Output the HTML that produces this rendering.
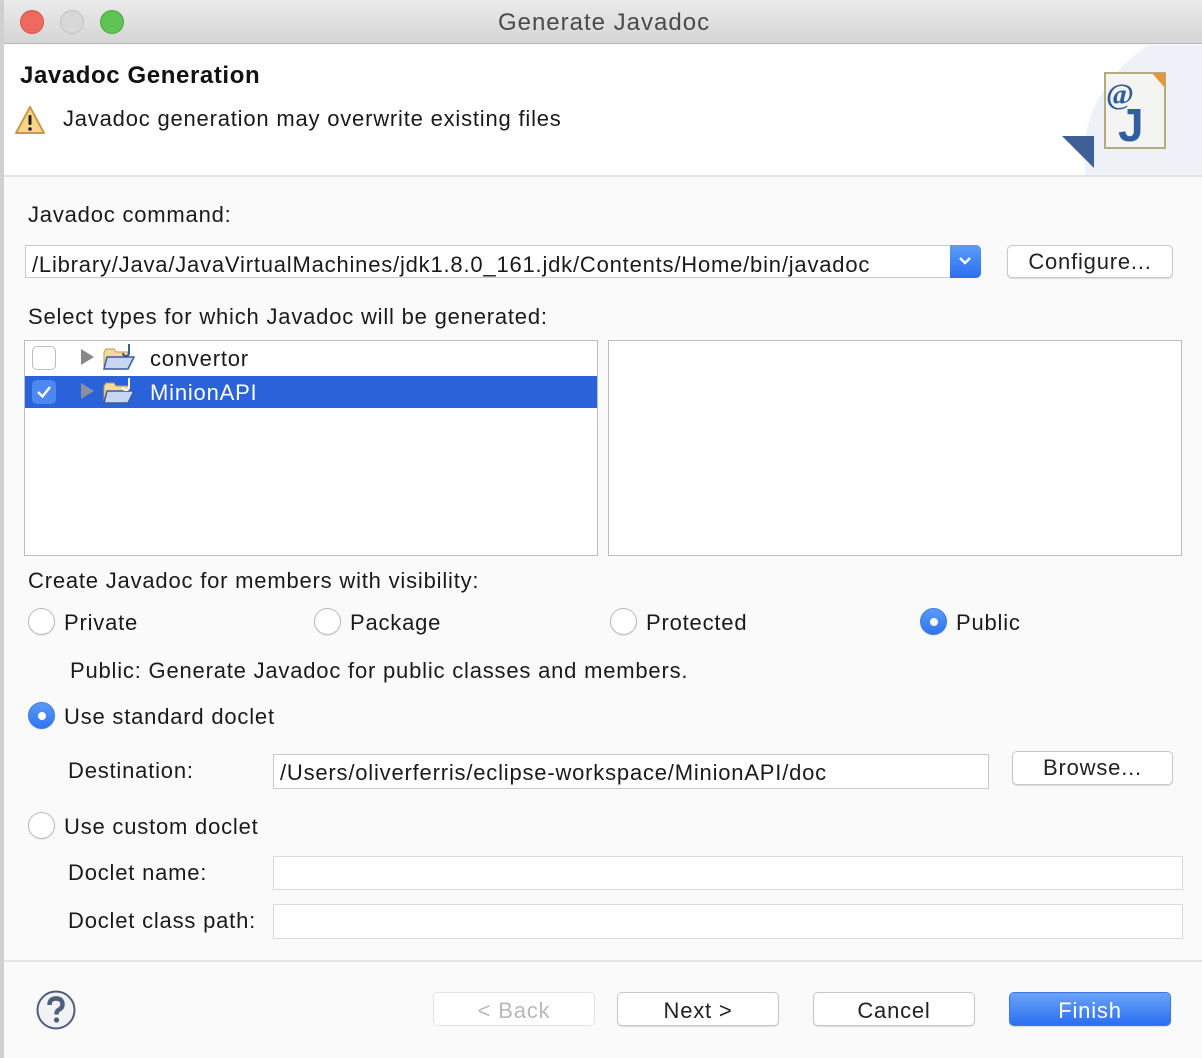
<!DOCTYPE html>
<html><head><meta charset="utf-8"><style>
*{margin:0;padding:0;box-sizing:border-box}
body{width:1202px;height:1058px;overflow:hidden;background:#fafafa;font-family:"Liberation Sans",Helvetica,Arial,sans-serif;color:#1a1a1a;position:relative;font-size:22px;letter-spacing:0.8px}
.a{position:absolute;white-space:nowrap}
.t{line-height:24px;margin-top:1px}
.btn{position:absolute;background:#fff;border:1px solid #c8c8c8;border-radius:5px;box-shadow:0 1px 1px rgba(0,0,0,.12);text-align:center;font-size:22px;color:#222}
.field{position:absolute;background:#fff;border:1px solid #c9c9c9}
.radio{position:absolute;width:27px;height:27px;border-radius:50%;border:1px solid #b9b9b9;background:#fff;box-shadow:0 1px 1px rgba(0,0,0,.08)}
.radio.on{background:linear-gradient(#5a9bf7,#2f74ef);border-color:#3a7be8}
.radio.on::after{content:"";position:absolute;left:9px;top:9px;width:8px;height:8px;border-radius:50%;background:#fff}
</style></head><body>
<div class="a" style="left:0;top:0;width:4px;height:1058px;background:#d0d0d0"></div>
<div class="a" style="left:4px;top:0;width:1198px;height:44px;background:linear-gradient(#ebebeb,#d5d5d5);border-bottom:1px solid #b8b8b8"></div>
<div class="a" style="left:20px;top:10px;width:24px;height:24px;border-radius:50%;background:#ee6a5f;border:1px solid #d75549"></div>
<div class="a" style="left:60px;top:10px;width:24px;height:24px;border-radius:50%;background:#d8d8d8;border:1px solid #c4c4c4"></div>
<div class="a" style="left:100px;top:10px;width:24px;height:24px;border-radius:50%;background:#5fc454;border:1px solid #4aa83f"></div>
<div class="a t" style="left:0;width:1208px;text-align:center;top:10px;font-size:24px;letter-spacing:1px;color:#4a4a4a">Generate Javadoc</div>
<div class="a" style="left:4px;top:45px;width:1198px;height:132px;background:#fff;border-bottom:2px solid #e4e4e4;overflow:hidden">
  <div class="a" style="left:1080px;top:-40px;width:400px;height:300px;border-radius:50%;background:#eef1f8"></div>
</div>
<div class="a t" style="left:20px;top:63px;font-weight:bold;font-size:24px;letter-spacing:0.6px;color:#111">Javadoc Generation</div>
<svg class="a" style="left:14px;top:104px" width="32" height="32" viewBox="0 0 32 32"><path d="M16 3 L30 29 L2 29 Z" fill="#f7d68a" stroke="#c79a4a" stroke-width="2" stroke-linejoin="round"/><rect x="14.5" y="11" width="3" height="10" rx="1.2" fill="#222"/><circle cx="16" cy="25" r="1.8" fill="#222"/></svg>
<div class="a t" style="left:63px;top:106px">Javadoc generation may overwrite existing files</div>
<svg class="a" style="left:1060px;top:70px" width="110" height="100" viewBox="0 0 110 100">
<path d="M2 66 L34 66 L34 98 Z" fill="#3f5f99"/>
<rect x="45" y="3" width="60" height="75" fill="#f4f4f2" stroke="#b5ab7c" stroke-width="2"/>
<path d="M92 3 L105 3 L105 18 Z" fill="#e3963c"/>
<text x="46" y="34" font-family="Liberation Serif,serif" font-size="30" fill="#2e5d9c" font-weight="bold">@</text>
<text x="58" y="71" font-family="Liberation Sans,sans-serif" font-size="46" fill="#2f5f9e" font-weight="bold">J</text>
</svg>
<div class="a t" style="left:28px;top:202px">Javadoc command:</div>
<div class="field" style="left:25px;top:245px;width:956px;height:33px;border-radius:0 5px 5px 0"></div>
<div class="a t" style="left:32px;top:252px">/Library/Java/JavaVirtualMachines/jdk1.8.0_161.jdk/Contents/Home/bin/javadoc</div>
<div class="a" style="left:950px;top:245px;width:31px;height:33px;background:linear-gradient(#5d9cf8,#2b6ef0);border-radius:0 5px 5px 0"></div>
<svg class="a" style="left:958px;top:255px" width="14" height="12"><path d="M2 3 L7 8 L12 3" stroke="#fff" stroke-width="2.4" fill="none"/></svg>
<div class="btn" style="left:1007px;top:245px;width:166px;height:33px;line-height:31px">Configure...</div>
<div class="a t" style="left:28px;top:304px">Select types for which Javadoc will be generated:</div>
<div class="field" style="left:24px;top:340px;width:574px;height:216px;border-color:#bdbdbd"></div>
<div class="field" style="left:608px;top:340px;width:574px;height:216px;border-color:#bdbdbd"></div>
<div class="a" style="left:25px;top:376px;width:572px;height:32px;background:#2a62d9"></div>
<div class="a" style="left:32px;top:346px;width:24px;height:24px;border:1px solid #bcbcbc;border-radius:5px;background:#fff"></div>
<div class="a" style="left:32px;top:380px;width:24px;height:24px;border-radius:5px;background:#4d88f0"></div>
<svg class="a" style="left:35px;top:383px" width="18" height="18"><path d="M3 9 L7.5 13.5 L15 4" stroke="#fff" stroke-width="2.4" fill="none"/></svg>
<svg class="a" style="left:80px;top:348px" width="16" height="18"><path d="M1 1 L14 9 L1 17Z" fill="#888"/></svg>
<svg class="a" style="left:80px;top:382px" width="16" height="18"><path d="M1 1 L14 9 L1 17Z" fill="#8a8fa0"/></svg>
<svg class="a" style="left:102px;top:342px" width="34" height="30" viewBox="0 0 34 30"><path d="M2 10 L2 27 L26 27 L26 10 L14 10 L12 7 L4 7 Z" fill="#f3d99a" stroke="#b89a5a"/><path d="M5 15 L32 15 L26 27 L2 27 Z" fill="#c7d7f2" stroke="#3a5a9a" stroke-width="1.5"/><path d="M27 2 L27 11 Q27 14 24 14 Q21 14 21 11" stroke="#3a5a9a" stroke-width="2" fill="none"/></svg>
<svg class="a" style="left:102px;top:376px" width="34" height="30" viewBox="0 0 34 30"><path d="M2 10 L2 27 L26 27 L26 10 L14 10 L12 7 L4 7 Z" fill="#f3d99a" stroke="#b89a5a"/><path d="M5 15 L32 15 L26 27 L2 27 Z" fill="#c7d7f2" stroke="#3a5a9a" stroke-width="1.5"/><path d="M27 2 L27 11 Q27 14 24 14 Q21 14 21 11" stroke="#fff" stroke-width="2" fill="none"/></svg>
<div class="a t" style="left:150px;top:346px">convertor</div>
<div class="a t" style="left:150px;top:380px;color:#fff">MinionAPI</div>
<div class="a t" style="left:28px;top:568px">Create Javadoc for members with visibility:</div>
<div class="radio" style="left:28px;top:608px"></div><div class="a t" style="left:64px;top:610px">Private</div>
<div class="radio" style="left:314px;top:608px"></div><div class="a t" style="left:350px;top:610px">Package</div>
<div class="radio" style="left:610px;top:608px"></div><div class="a t" style="left:646px;top:610px">Protected</div>
<div class="radio on" style="left:920px;top:608px"></div><div class="a t" style="left:956px;top:610px">Public</div>
<div class="a t" style="left:70px;top:658px">Public: Generate Javadoc for public classes and members.</div>
<div class="radio on" style="left:28px;top:702px"></div><div class="a t" style="left:64px;top:704px">Use standard doclet</div>
<div class="a t" style="left:68px;top:758px">Destination:</div>
<div class="field" style="left:273px;top:754px;width:716px;height:35px"></div>
<div class="a t" style="left:280px;top:760px">/Users/oliverferris/eclipse-workspace/MinionAPI/doc</div>
<div class="btn" style="left:1012px;top:751px;width:161px;height:34px;line-height:32px">Browse...</div>
<div class="radio" style="left:28px;top:812px"></div><div class="a t" style="left:64px;top:814px">Use custom doclet</div>
<div class="a t" style="left:68px;top:860px">Doclet name:</div>
<div class="field" style="left:273px;top:856px;width:910px;height:34px;border-color:#dadada"></div>
<div class="a t" style="left:68px;top:908px">Doclet class path:</div>
<div class="field" style="left:273px;top:904px;width:910px;height:35px;border-color:#dadada"></div>
<div class="a" style="left:4px;top:960px;width:1198px;height:2px;background:#e6e6e6"></div>
<svg class="a" style="left:35px;top:989px" width="42" height="42" viewBox="0 0 42 42"><circle cx="21" cy="21" r="18.5" fill="#f2f2f4" stroke="#4f5d7e" stroke-width="2"/><path d="M14.5 16 Q14.5 9.5 21 9.5 Q27.5 9.5 27.5 15.5 Q27.5 19 23.5 21 Q21.5 22 21.5 25.5" stroke="#4f5d7e" stroke-width="4.5" fill="none"/><circle cx="21.5" cy="31" r="2.6" fill="#4f5d7e"/></svg>
<div class="btn" style="left:433px;top:992px;width:162px;height:34px;line-height:35px;color:#b8b8b8;border-color:#e3e3e3;box-shadow:none">&lt; Back</div>
<div class="btn" style="left:617px;top:992px;width:162px;height:34px;line-height:35px">Next &gt;</div>
<div class="btn" style="left:813px;top:992px;width:162px;height:34px;line-height:35px">Cancel</div>
<div class="btn" style="left:1009px;top:992px;width:162px;height:34px;line-height:35px;background:linear-gradient(#6aa4f8,#2c6ef2);border-color:#3a78ec;color:#fff">Finish</div>
</body></html>
